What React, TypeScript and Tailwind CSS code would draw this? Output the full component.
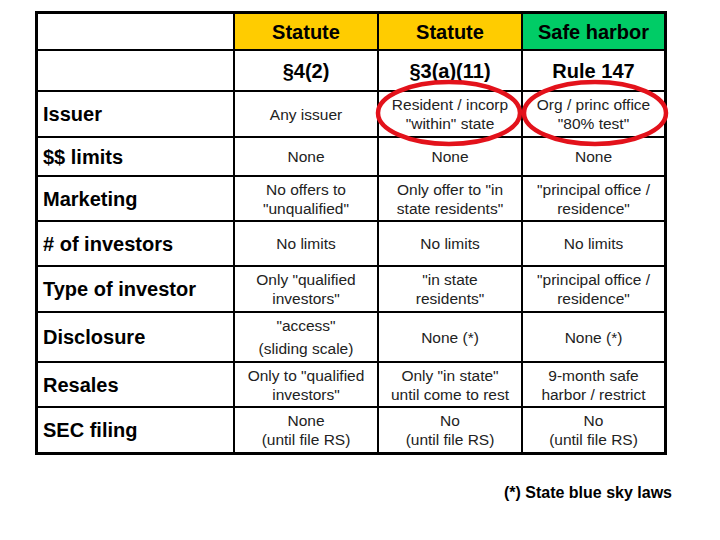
import { Fragment } from "react";

const font = { fontFamily: '"Liberation Sans", Arial, sans-serif' };

type Row = { label: string; cells: string[][]; leading?: string };

const rows: Row[] = [
  { label: "Issuer", cells: [["Any issuer"], ["Resident / incorp", "\"within\" state"], ["Org / princ office", "\"80% test\""]] },
  { label: "$$ limits", cells: [["None"], ["None"], ["None"]] },
  { label: "Marketing", cells: [["No offers to", "\"unqualified\""], ["Only offer to \"in", "state residents\""], ["\"principal office /", "residence\""]] },
  { label: "# of investors", cells: [["No limits"], ["No limits"], ["No limits"]] },
  { label: "Type of investor", cells: [["Only \"qualified", "investors\""], ["\"in state", "residents\""], ["\"principal office /", "residence\""]] },
  { label: "Disclosure", cells: [["\"access\"", "(sliding scale)"], ["None (*)"], ["None (*)"]], leading: "first" },
  { label: "Resales", cells: [["Only to \"qualified", "investors\""], ["Only \"in state\"", "until come to rest"], ["9-month safe", "harbor / restrict"]] },
  { label: "SEC filing", cells: [["None", "(until file RS)"], ["No", "(until file RS)"], ["No", "(until file RS)"]] },
];

export default function App() {
  return (
    <div className="relative w-[720px] h-[540px] bg-white text-black" style={font}>
      <div className="pt-[11px] pl-[35px]">
        <div className="grid w-[632px] grid-cols-[195px_142px_142px_141px] grid-rows-[35px_39px_44px_37px_43px_43px_44px_48px_43px_44px] gap-[2px] border-[3px] border-black bg-black">
          <div className="bg-white" />
          <div className="flex items-center justify-center bg-[#ffcc00] text-[20px] font-bold">Statute</div>
          <div className="flex items-center justify-center bg-[#ffcc00] text-[20px] font-bold">Statute</div>
          <div className="flex items-center justify-center bg-[#00cc66] text-[20px] font-bold">Safe harbor</div>

          <div className="bg-white" />
          <div className="flex items-center justify-center bg-white text-[20px] font-bold">§4(2)</div>
          <div className="flex items-center justify-center bg-white text-[20px] font-bold">§3(a)(11)</div>
          <div className="flex items-center justify-center bg-white text-[20px] font-bold">Rule 147</div>

          {rows.map((row) => (
            <Fragment key={row.label}>
              <div className="flex items-center bg-white pl-[5px] text-[20px] font-bold">
                {row.label}
              </div>
              {row.cells.map((lines, i) => (
                <div
                  key={i}
                  className={`flex flex-col items-center justify-center bg-white text-center text-[15.5px] text-[#222] ${
                    row.leading && i === 0 ? "leading-[23px]" : "leading-[19px]"
                  }`}
                >
                  {lines.map((l) => (
                    <span key={l} className="whitespace-nowrap">{l}</span>
                  ))}
                </div>
              ))}
            </Fragment>
          ))}
        </div>
      </div>

      <div className="mt-[29px] pr-[48px] text-right text-[16px] font-bold leading-[18px]">
        (*) State blue sky laws
      </div>

      <svg className="pointer-events-none absolute left-0 top-0" width="720" height="540">
        <ellipse cx="449" cy="113" rx="71" ry="31" fill="none" stroke="#e3121b" strokeWidth="4.5" />
        <ellipse cx="595" cy="113" rx="71" ry="31" fill="none" stroke="#e3121b" strokeWidth="4.5" />
      </svg>
    </div>
  );
}
